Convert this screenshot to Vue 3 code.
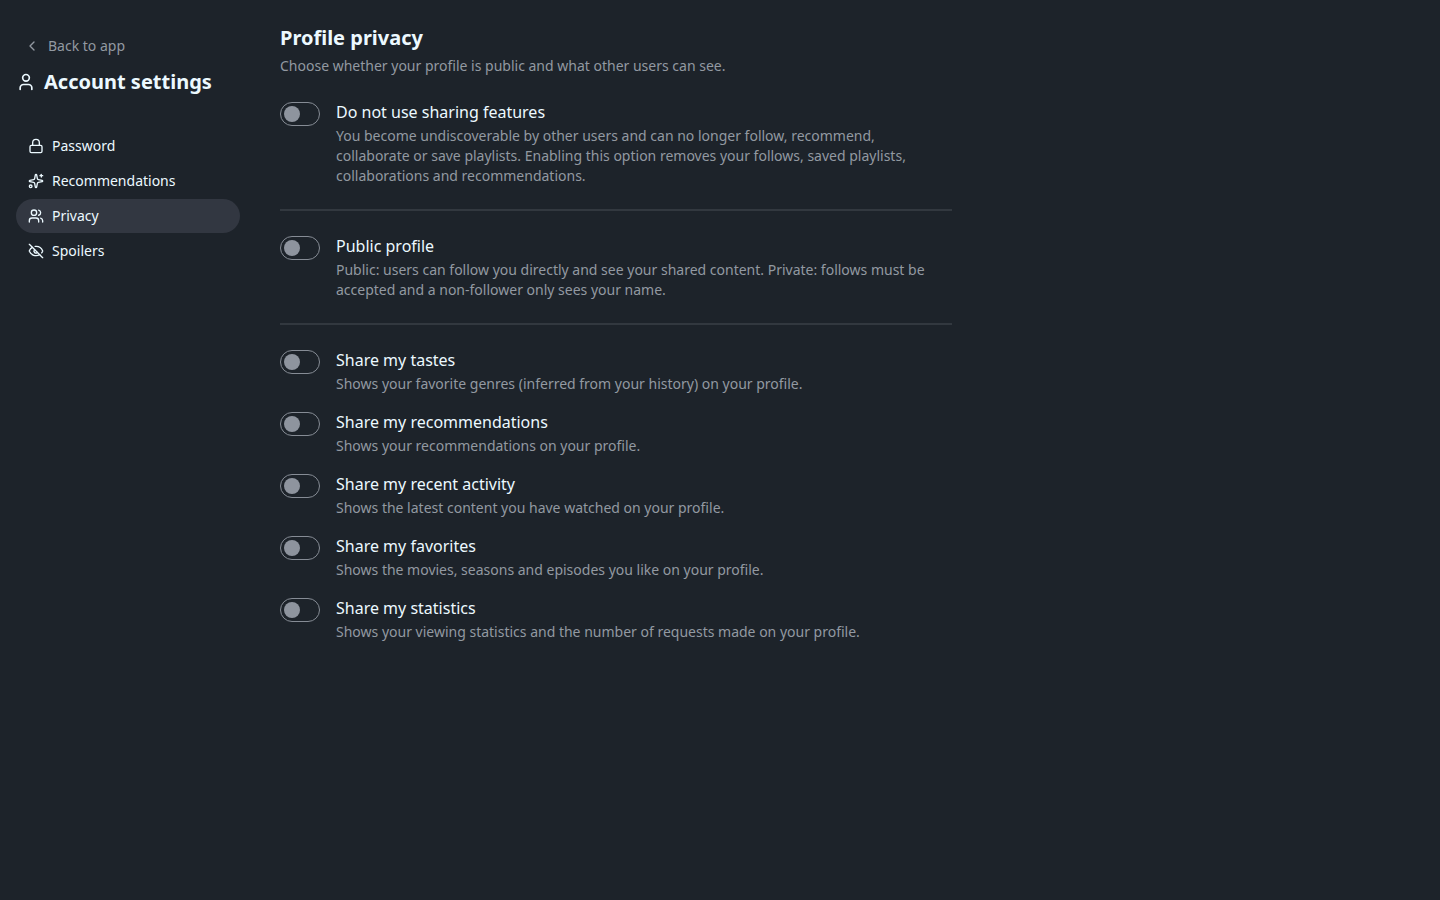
<script setup>

import { reactive, ref } from 'vue'

const currentPage = ref('privacy');

const menu = [
    { id: 'password', title: 'Password' },
    { id: 'recommendations', title: 'Recommendations' },
    { id: 'privacy', title: 'Privacy' },
    { id: 'spoilers', title: 'Spoilers' },
];

const groups = reactive([
    [
        {
            id: 'noSharing',
            title: 'Do not use sharing features',
            text: 'You become undiscoverable by other users and can no longer follow, recommend, collaborate or save playlists. Enabling this option removes your follows, saved playlists, collaborations and recommendations.',
            value: false,
        },
    ],
    [
        {
            id: 'publicProfile',
            title: 'Public profile',
            text: 'Public: users can follow you directly and see your shared content. Private: follows must be accepted and a non-follower only sees your name.',
            value: false,
        },
    ],
    [
        { id: 'tastes', title: 'Share my tastes', text: 'Shows your favorite genres (inferred from your history) on your profile.', value: false },
        { id: 'shareRecommendations', title: 'Share my recommendations', text: 'Shows your recommendations on your profile.', value: false },
        { id: 'activity', title: 'Share my recent activity', text: 'Shows the latest content you have watched on your profile.', value: false },
        { id: 'favorites', title: 'Share my favorites', text: 'Shows the movies, seasons and episodes you like on your profile.', value: false },
        { id: 'statistics', title: 'Share my statistics', text: 'Shows your viewing statistics and the number of requests made on your profile.', value: false },
    ],
]);

</script>

<template>
    <div class="settings">
        <aside class="sidebar">
            <a class="back" href="#">
                <svg class="icon" viewBox="0 0 24 24"><path d="m15 18-6-6 6-6" /></svg>
                Back to app
            </a>
            <h2 class="sidebarTitle">
                <svg class="icon iconLarge" viewBox="0 0 24 24">
                    <path d="M19 21v-2a4 4 0 0 0-4-4H9a4 4 0 0 0-4 4v2" />
                    <circle cx="12" cy="7" r="4" />
                </svg>
                Account settings
            </h2>
            <nav class="menu">
                <a v-for="item in menu" :key="item.id" href="#"
                    class="menuItem"
                    :class="{ active: item.id === currentPage }"
                    @click.prevent="currentPage = item.id">
                    <svg v-if="item.id === 'password'" class="icon" viewBox="0 0 24 24">
                        <rect width="18" height="11" x="3" y="11" rx="2" ry="2" />
                        <path d="M7 11V7a5 5 0 0 1 10 0v4" />
                    </svg>
                    <svg v-else-if="item.id === 'recommendations'" class="icon" viewBox="0 0 24 24">
                        <path d="M11.017 2.814a1 1 0 0 1 1.966 0l1.051 5.558a2 2 0 0 0 1.594 1.594l5.558 1.051a1 1 0 0 1 0 1.966l-5.558 1.051a2 2 0 0 0-1.594 1.594l-1.051 5.558a1 1 0 0 1-1.966 0l-1.051-5.558a2 2 0 0 0-1.594-1.594l-5.558-1.051a1 1 0 0 1 0-1.966l5.558-1.051a2 2 0 0 0 1.594-1.594z" />
                        <path d="M20 2v4" />
                        <path d="M22 4h-4" />
                        <circle cx="4" cy="20" r="2" />
                    </svg>
                    <svg v-else-if="item.id === 'privacy'" class="icon" viewBox="0 0 24 24">
                        <path d="M16 21v-2a4 4 0 0 0-4-4H6a4 4 0 0 0-4 4v2" />
                        <circle cx="9" cy="7" r="4" />
                        <path d="M22 21v-2a4 4 0 0 0-3-3.87" />
                        <path d="M16 3.13a4 4 0 0 1 0 7.75" />
                    </svg>
                    <svg v-else class="icon" viewBox="0 0 24 24">
                        <path d="M10.733 5.076a10.744 10.744 0 0 1 11.205 6.575 1 1 0 0 1 0 .696 10.747 10.747 0 0 1-1.444 2.49" />
                        <path d="M14.084 14.158a3 3 0 0 1-4.242-4.242" />
                        <path d="M17.479 17.499a10.75 10.75 0 0 1-15.417-5.151 1 1 0 0 1 0-.696 10.75 10.75 0 0 1 4.446-5.143" />
                        <path d="m2 2 20 20" />
                    </svg>
                    {{ item.title }}
                </a>
            </nav>
        </aside>
        <main class="content">
            <h1 class="contentTitle">Profile privacy</h1>
            <p class="contentText">Choose whether your profile is public and what other users can see.</p>
            <div class="options">
                <template v-for="(group, index) in groups" :key="index">
                    <hr v-if="index > 0" class="divider">
                    <div v-for="option in group" :key="option.id" class="option">
                        <input :id="option.id" v-model="option.value" type="checkbox" class="toggle"
                            :aria-describedby="option.id + 'Text'">
                        <div>
                            <label :for="option.id" class="optionTitle">{{ option.title }}</label>
                            <p :id="option.id + 'Text'" class="optionText">{{ option.text }}</p>
                        </div>
                    </div>
                </template>
            </div>
        </main>
    </div>
</template>

<style>

body {
    background: #1d232a;
}

</style>

<style scoped>

.settings {
    display: flex;
    min-height: 100vh;
    color: #ecf9ff;
    font-family: "Noto Sans", sans-serif;
    font-size: 14px;
    line-height: 20px;
}

.settings * {
    box-sizing: border-box;
}

.icon {
    flex: none;
    width: 16px;
    height: 16px;
    fill: none;
    stroke: currentColor;
    stroke-width: 2;
    stroke-linecap: round;
    stroke-linejoin: round;
}

.iconLarge {
    width: 20px;
    height: 20px;
}

.sidebar {
    flex: none;
    width: 256px;
    padding: 30px 16px;
}

.back {
    display: flex;
    align-items: center;
    gap: 8px;
    height: 32px;
    padding: 0 8px;
    color: #9299a1;
    text-decoration: none;
}

.sidebarTitle {
    display: flex;
    align-items: center;
    gap: 8px;
    margin: 6px 0 33px;
    font-size: 20px;
    line-height: 28px;
}

.menu {
    display: flex;
    flex-direction: column;
    gap: 1px;
}

.menuItem {
    display: flex;
    align-items: center;
    gap: 8px;
    height: 34px;
    padding: 0 12px;
    border-radius: 17px;
    color: inherit;
    text-decoration: none;
}

.menuItem:hover,
.menuItem.active {
    background: #323741;
}

.content {
    flex: 1;
    min-width: 0;
    max-width: 720px;
    padding: 24px;
}

.contentTitle {
    margin: 0 0 4px;
    font-size: 20px;
    line-height: 28px;
}

.contentText {
    margin: 0 0 24px;
    color: #9299a1;
}

.options {
    display: flex;
    flex-direction: column;
    gap: 16px;
}

.divider {
    width: 100%;
    height: 2px;
    margin: 7px 0;
    border: none;
    background: #32383f;
}

.option {
    display: flex;
    align-items: flex-start;
    gap: 16px;
}

.optionTitle {
    display: block;
    font-size: 16px;
    line-height: 24px;
    cursor: pointer;
}

.optionText {
    margin: 2px 0 0;
    color: #9299a1;
}

.toggle {
    flex: none;
    appearance: none;
    width: 40px;
    height: 24px;
    margin: 2px 0 0;
    padding: 3px;
    border: 1px solid #868c95;
    border-radius: 12px;
    cursor: pointer;
}

.toggle::before {
    content: "";
    display: block;
    width: 16px;
    height: 16px;
    border-radius: 50%;
    background: #8e949e;
}

.toggle:checked::before {
    margin-left: auto;
    background: #ecf9ff;
}

</style>
